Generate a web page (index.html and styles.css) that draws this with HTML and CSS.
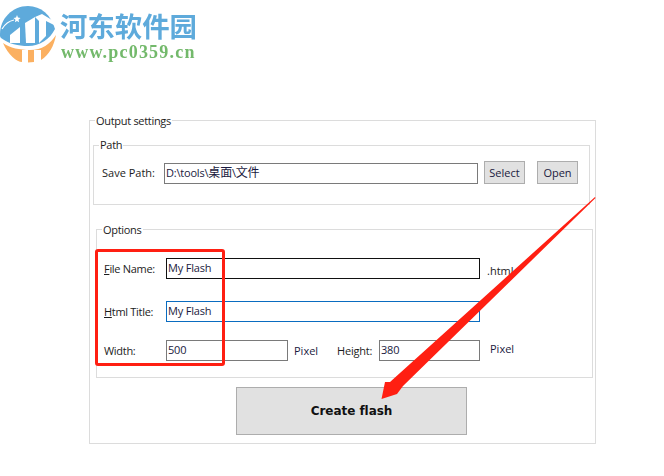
FILE: index.html
```
<!DOCTYPE html>
<html lang="zh">
<head>
<meta charset="utf-8">
<title>Output settings</title>
<link rel="stylesheet" href="styles.css">
</head>
<body>
<header class="logo">
  <svg class="logo-mark" width="58" height="64" viewBox="0 0 58 64">
    <path fill="#fbb061" d="M3 43 C8 55 17 62 22 62 L22 50 L28 50 L28 62.500 L34 62 L34 50 L41 50 L41 60 C49 55 54 46 56 35 C50 44 42 50 30 50 C20 50 10 48 3 43 Z"/>
    <path fill="#5eaadb" d="M28 6 C12 6 0 19 0 34 C0 36 0 37 1 38 C9 44 18 46 28 46 C40 46 50 39 55 29 C51 15 41 6 28 6 Z"/>
    <path fill="#fff" d="M17 15 l1 2.500 l2.500 .5 l-2 1.700 l.6 2.600 l-2.100 -1.400 l-2.100 1.400 l.6 -2.600 l-2 -1.700 l2.500 -.5 z"/>
    <path fill="none" stroke="#fff" stroke-width="1.200" d="M2 29 C5 24 9 21 14 20"/>
    <path fill="#fff" d="M10 35 L20 27 L20 43 L10 43 Z"/>
    <path fill="#fff" d="M25 23 L35 17 L35 43 L26 43 Z"/>
    <path fill="#fff" d="M35 17 L42 14 L57 23 L56 26 L46 21 L46 36 L39 43 L39 21 Z"/>
  </svg>
  <div class="logo-text">
    <div class="logo-cn">河东软件园</div>
    <div class="logo-url">www.pc0359.cn</div>
  </div>
</header>
<main class="panel">
  <fieldset class="group group-outer">
    <legend>Output settings</legend>
    <fieldset class="group group-path">
      <legend>Path</legend>
      <div class="row">
        <label class="path-label">Save Path:</label>
        <div class="field field-path">D:\tools\<span class="cjk">桌面</span>\<span class="cjk">文件</span></div>
        <button class="btn btn-select">Select</button>
        <button class="btn btn-open">Open</button>
      </div>
    </fieldset>
    <fieldset class="group group-options">
      <legend>Options</legend>
      <div class="row row-name">
        <label class="opt-label"><u>F</u>ile Name:</label>
        <div class="field field-long field-dark">My Flash</div>
        <span class="suffix">.html</span>
      </div>
      <div class="row row-title">
        <label class="opt-label"><u>H</u>tml Title:</label>
        <div class="field field-long field-focus">My Flash</div>
      </div>
      <div class="row row-size">
        <label class="opt-label">Width:</label>
        <div class="field field-width">500</div>
        <span class="unit">Pixel</span>
        <label class="height-label">Height:</label>
        <div class="field field-height">380</div>
        <span class="unit unit-last">Pixel</span>
      </div>
    </fieldset>
    <button class="create">Create flash</button>
  </fieldset>
</main>
<div class="mark-rect"></div>
<svg class="mark-arrow" width="225" height="215" viewBox="0 0 225 215">
  <path fill="#ff1f12" d="M220 7 L15 192 L10 192 L6.500 209 L22 204 L28 196 L220.500 8 Z"/>
</svg>
</body>
</html>
```
FILE: styles.css
```
* { box-sizing: border-box; }
html, body { margin: 0; padding: 0; }
body {
  width: 664px;
  height: 476px;
  position: relative;
  overflow: hidden;
  background: #fff;
  font-family: "Open Sans", "Noto Sans CJK SC", sans-serif;
  font-size: 11px;
  color: #1c1c1c;
}
.logo { display: flex; gap: 2px; height: 64px; filter: blur(.35px); }
.logo-mark { flex: none; }
.logo-text { display: flex; flex-direction: column; padding-top: 9px; }
.logo-cn {
  font-family: "Noto Sans CJK SC", sans-serif;
  font-weight: 700;
  font-size: 27.400px;
  line-height: 32px;
  color: #5eaadb;
}
.logo-url {
  font-family: "Liberation Serif", serif;
  font-weight: 700;
  font-size: 18px;
  line-height: 20px;
  padding: 1px 0 0 1px;
  color: #73b96b;
  letter-spacing: 1.200px;
}
.panel { padding: 55px 0 0 89px; }
.group {
  margin: 0;
  padding: 0;
  border: 1px solid #dcdcdc;
  min-width: 0;
}
.group legend { padding: 0 1px; margin-left: 5px; line-height: 16px; height: 16px; letter-spacing: -.3px; }
.group-outer > legend, .group-options > legend { line-height: 18px; }
.group-outer { width: 507px; height: 332px; margin-top: -7px; }
.group-path { width: 497px; height: 68px; margin: 9px 0 0 3px; }
.group-options { width: 497px; height: 157px; margin: 16px 0 0 6px; }
.row { display: flex; align-items: center; }
.group-path .row { padding: 10px 0 0 8px; }
.path-label { width: 62px; padding-bottom: 2px; }
.field {
  height: 21px;
  border: 1px solid #7a7a7a;
  background: #fff;
  padding: 0 1px;
  line-height: 17px;
  white-space: nowrap;
  color: #1a1a40;
  letter-spacing: -.2px;
}
.cjk { font-size: 12px; }
.field-path { width: 314px; }
.btn {
  width: 41px;
  height: 23px;
  padding: 0;
  margin-top: -2px;
  border: 1px solid #adadad;
  background: #e1e1e1;
  font: inherit;
  color: #1a1a40;
}
.btn-select { margin-left: 6px; }
.btn-open { margin-left: 12px; }
.row-name { padding: 21px 0 0 7px; }
.row-title { padding: 22px 0 0 7px; }
.row-size { padding: 18px 0 0 7px; }
.opt-label { width: 62px; color: #1c1c1c; letter-spacing: -.3px; }
.field-long { width: 314px; }
.field-dark { border-color: #111; }
.field-focus { border-color: #0a6cc0; }
.suffix { margin-left: 7px; padding-top: 3px; }
.field-width { width: 122px; }
.unit { margin-left: 6px; width: 24px; color: #1a1a40; }
.height-label { margin-left: 19px; width: 42px; letter-spacing: -.2px; }
.field-height { width: 101px; }
.unit-last { margin: -4px 0 0 10px; }
.create {
  display: block;
  width: 231px;
  height: 48px;
  margin: 9px 0 0 146px;
  padding: 0;
  border: 1px solid #adadad;
  background: #e1e1e1;
  font-family: "DejaVu Sans", sans-serif;
  font-weight: 700;
  font-size: 12px;
  letter-spacing: -.05px;
  color: #111;
}
.mark-rect {
  position: absolute;
  left: 95px;
  top: 249px;
  width: 130px;
  height: 117px;
  border: 3px solid #ff1f12;
  border-radius: 3px;
}
.mark-arrow { position: absolute; left: 375px; top: 190px; }
```
